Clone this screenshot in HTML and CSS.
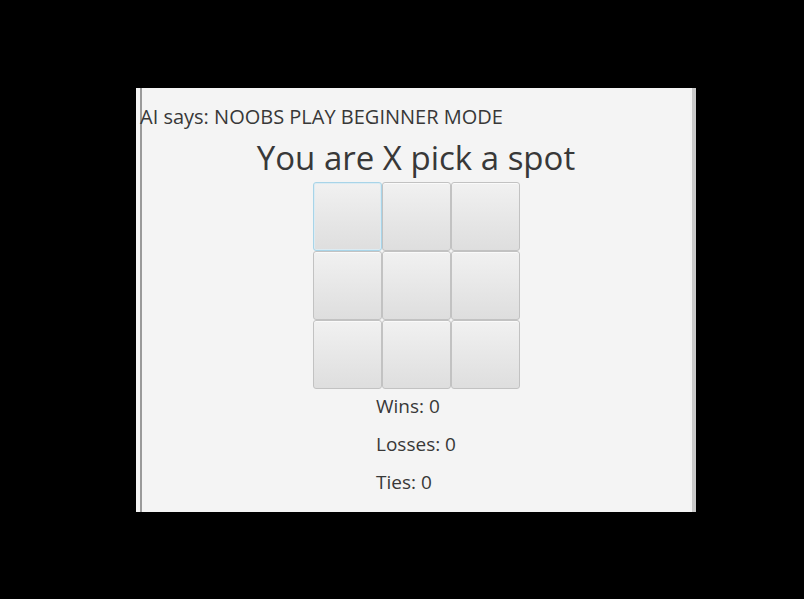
FILE: index.html
```html
<!DOCTYPE html>
<html>
<head>
<meta charset="utf-8">
<link rel="stylesheet" href="styles.css">
</head>
<body>
<div class="window">
  <div class="ai-line">AI says: NOOBS PLAY BEGINNER MODE</div>
  <div class="center">
    <div class="title">You are X pick a spot</div>
    <div class="board">
      <button class="cell focused"></button>
      <button class="cell"></button>
      <button class="cell"></button>
      <button class="cell"></button>
      <button class="cell"></button>
      <button class="cell"></button>
      <button class="cell"></button>
      <button class="cell"></button>
      <button class="cell"></button>
    </div>
    <div class="stats">
      <div class="stat">Wins: 0</div>
      <div class="stat">Losses: 0</div>
      <div class="stat">Ties: 0</div>
    </div>
  </div>
</div>
</body>
</html>
```
FILE: styles.css
```css
html, body {
  margin: 0;
  padding: 0;
  background: #000;
}
body {
  width: 804px;
  height: 599px;
  padding: 88px 0 0 136px;
  box-sizing: border-box;
}
.window {
  width: 560px;
  height: 424px;
  box-sizing: border-box;
  background: #f4f4f4;
  border-left: 4px solid #f4f4f4;
  border-right: 4px solid #c9c9c9;
  box-shadow: inset 2px 0 0 #9a9a9a;
  font-family: "Open Sans", "Noto Sans", sans-serif;
  color: #383838;
  display: flex;
  flex-direction: column;
}
.ai-line {
  margin-top: 16px;
  font-size: 20px;
  line-height: 26px;
}
.center {
  display: flex;
  flex-direction: column;
  align-items: center;
}
.title {
  margin-top: 6px;
  margin-bottom: 2px;
  font-size: 33px;
  line-height: 44px;
}
.board {
  display: grid;
  grid-template-columns: repeat(3, 69px);
  grid-template-rows: repeat(3, 69px);
}
.cell {
  margin: 0;
  padding: 0;
  border: 1px solid #c2c2c2;
  border-radius: 3px;
  background: linear-gradient(#f1f1f1, #dedede);
  box-shadow: inset 0 1px 0 #fafafa;
}
.cell.focused {
  border-color: #a8d4e8;
  box-shadow: inset 0 0 0 1px #dcebf2;
}
.stats {
  display: flex;
  flex-direction: column;
  margin-top: 5px;
  gap: 14px;
}
.stat {
  font-size: 19px;
  line-height: 24px;
}
```
